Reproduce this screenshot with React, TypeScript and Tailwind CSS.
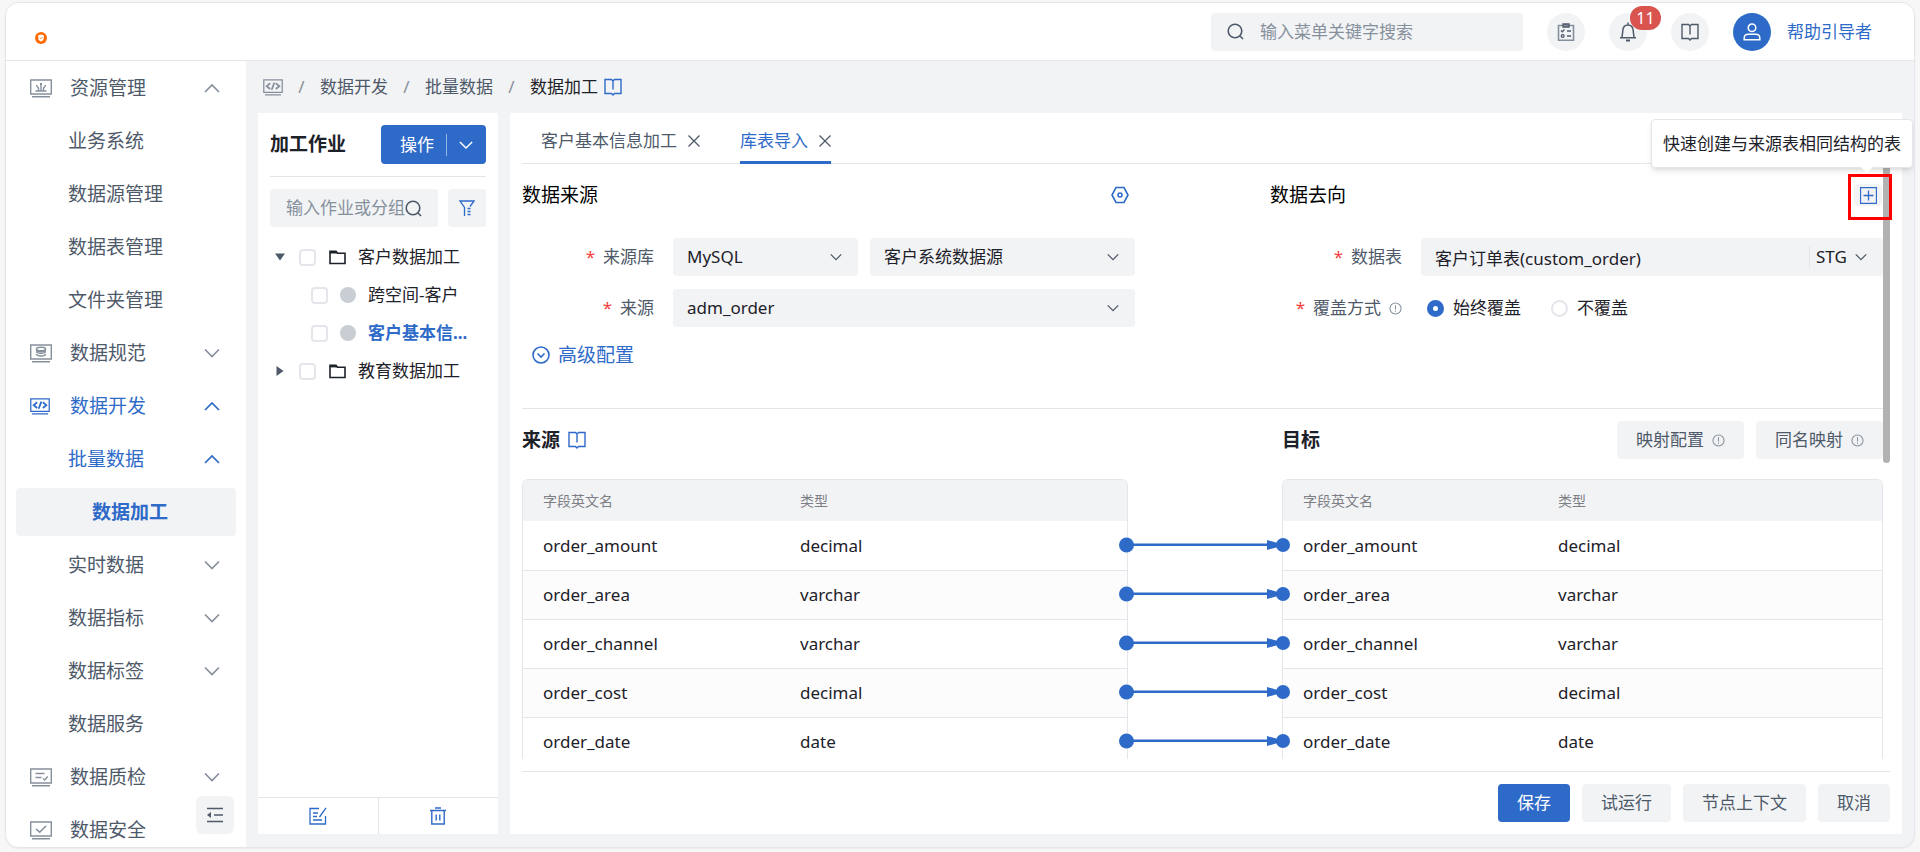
import { ReactNode } from "react";
import { clsx } from "clsx";

interface MenuItem {
  label: string;
  level: 1 | 2 | 3;
  icon?: ReactNode;
  arrow?: "up" | "down";
  active?: boolean;
  current?: boolean;
}

interface IconProps {
  className?: string;
}

const Chevron = ({ className = "", up = false }: IconProps & { up?: boolean }) => (
  <svg
    viewBox="0 0 16 16"
    className={clsx("shrink-0", className)}
    fill="none"
    stroke="currentColor"
    strokeWidth="1.7"
  >
    <path d={up ? "M1 12 8 5l7 7" : "M1 4.500 8 11.500l7-7"} />
  </svg>
);

const CloseIcon = () => (
  <svg viewBox="0 0 12 12" className="size-3" stroke="currentColor" strokeWidth="1.3">
    <path d="M.5.5l11 11M11.500.5l-11 11" />
  </svg>
);

const SearchIcon = ({ className = "size-[17px]" }: IconProps) => (
  <svg
    viewBox="0 0 17 17"
    className={clsx("shrink-0", className)}
    fill="none"
    stroke="currentColor"
    strokeWidth="1.6"
  >
    <circle cx="8" cy="8" r="6.800" />
    <path d="M12.700 12.700 16 16" />
  </svg>
);

const BookIcon = ({ className = "" }: IconProps) => (
  <svg
    viewBox="0 0 18 18"
    className={clsx("size-[18px] shrink-0", className)}
    fill="none"
    stroke="currentColor"
    strokeWidth="1.4"
  >
    <path d="M1 1.500h6.500L9 3l1.500-1.500H17v14h-6.500L9 17l-1.500-1.500H1zM9 3v8.500" />
  </svg>
);

const InfoIcon = () => (
  <svg
    viewBox="0 0 14 14"
    className="size-[13px] shrink-0 text-[#86909c]"
    fill="none"
    stroke="currentColor"
    strokeWidth="1.1"
  >
    <circle cx="7" cy="7" r="6" />
    <path d="M7 3.500v4.500M7 9.200v1.300" />
  </svg>
);

// monitor outline shared by all of the menu icons
const Screen = ({ children, className = "h-[19px] w-[22px]" }: { children: ReactNode; className?: string }) => (
  <svg
    viewBox="0 0 22 19"
    className={clsx("shrink-0", className)}
    fill="none"
    stroke="currentColor"
    strokeWidth="1.4"
  >
    <path d="M.7 1h20.600v14H.7zM2 17.700h18" />
    {children}
  </svg>
);

const CodeScreen = ({ className }: IconProps) => (
  <Screen className={className}>
    <path d="M7.800 4.800 4 8l3.800 3.200M14.200 4.800 18 8l-3.800 3.200M12.500 4l-3 8" strokeWidth="2" />
  </Screen>
);

const menu: MenuItem[] = [
  {
    label: "资源管理",
    level: 1,
    arrow: "up",
    icon: (
      <Screen>
        <path d="M5.500 12h11M11 12V5M8.500 12V9L7 7.500M13.500 12V9L15 7.500" />
        <path d="M10 4h2v2h-2zM6 6h1.500v1.500H6zM14.500 6H16v1.500h-1.500z" fill="currentColor" stroke="none" />
      </Screen>
    ),
  },
  { label: "业务系统", level: 2 },
  { label: "数据源管理", level: 2 },
  { label: "数据表管理", level: 2 },
  { label: "文件夹管理", level: 2 },
  {
    label: "数据规范",
    level: 1,
    arrow: "down",
    icon: (
      <Screen>
        <ellipse cx="11" cy="5" rx="4.500" ry="1.700" />
        <path d="M6.500 7.500c0 2.300 9 2.300 9 0M6.500 10c0 2.600 9 2.600 9 0M6.500 5v1c0 2 9 2 9 0V5" />
      </Screen>
    ),
  },
  { label: "数据开发", level: 1, arrow: "up", active: true, icon: <CodeScreen className="h-[17px] w-5" /> },
  { label: "批量数据", level: 2, arrow: "up", active: true },
  { label: "数据加工", level: 3, active: true, current: true },
  { label: "实时数据", level: 2, arrow: "down" },
  { label: "数据指标", level: 2, arrow: "down" },
  { label: "数据标签", level: 2, arrow: "down" },
  { label: "数据服务", level: 2 },
  {
    label: "数据质检",
    level: 1,
    arrow: "down",
    icon: (
      <Screen>
        <path d="M5.500 5.500h9M5.500 9.500h6M13 10.500l1.700 1.500 3-3.500" />
      </Screen>
    ),
  },
  {
    label: "数据安全",
    level: 1,
    icon: (
      <Screen>
        <path d="M6 8l3.700 3.200L16 5" strokeWidth="1.600" />
      </Screen>
    ),
  },
];

const fields = [
  { name: "order_amount", type: "decimal" },
  { name: "order_area", type: "varchar" },
  { name: "order_channel", type: "varchar" },
  { name: "order_cost", type: "decimal" },
  { name: "order_date", type: "date" },
];

const Header = () => (
  <header className="flex h-[58px] shrink-0 items-center border-b border-[#e5e6eb] bg-white pr-[42px] pl-[29px] text-[17px]">
    <svg viewBox="0 0 12 12" className="mt-3 size-3">
      <circle cx="6" cy="6" r="6" fill="#ff6a00" />
      <path d="M3.200 3.200 6 2.500l2.800.7v2.900C8.800 8 7.500 9 6 9.600 4.500 9 3.200 8 3.200 6.100z" fill="#fff" />
      <path d="M4.700 5.900l1 1 1.700-1.700" fill="none" stroke="#ff6a00" strokeWidth=".7" />
    </svg>
    <label className="ml-auto flex h-[38px] w-[312px] items-center gap-4 rounded bg-[#f2f3f5] px-4 text-[#4e5969]">
      <SearchIcon />
      <input
        aria-label="搜索"
        placeholder="输入菜单关键字搜索"
        className="min-w-0 flex-1 bg-transparent outline-none placeholder:text-[#86909c]"
      />
    </label>
    <div className="ml-6 flex gap-6 text-[#4e5969]">
      <button aria-label="任务" className="flex size-[38px] items-center justify-center rounded-full bg-[#f2f3f5]">
        <svg viewBox="0 0 18 18" className="size-[18px]" fill="none" stroke="currentColor" strokeWidth="1.3">
          <path d="M6 2.500H1.500v14.800h15V2.500H12" stroke="#86909c" strokeWidth="1.6" />
          <path d="M6 1h6v3H6z" fill="#86909c" />
          <path d="M4 7.500l1.300 1.300L7.500 6.500M10 8h4M10 13h4" />
          <circle cx="5.700" cy="13" r="1.400" />
        </svg>
      </button>
      <button aria-label="通知" className="relative flex size-[38px] items-center justify-center rounded-full bg-[#f2f3f5]">
        <svg viewBox="0 0 18 20" className="h-5 w-[18px]" fill="none" stroke="currentColor" strokeWidth="1.5">
          <path d="M9 .5v2M1 15.800h16M3 15.800l.8-7.300C4.300 1 13.700 1 14.200 8.500l.8 7.300" />
          <path d="M7 18.500h4" strokeWidth="2" />
        </svg>
        <span className="absolute -top-[7px] left-[21px] flex h-6 w-[31px] items-center justify-center rounded-full bg-[#d9534f] text-base text-white">
          11
        </span>
      </button>
      <button aria-label="文档" className="flex size-[38px] items-center justify-center rounded-full bg-[#f2f3f5]">
        <BookIcon />
      </button>
      <a href="#" className="flex items-center gap-4 text-[#2e6ac8]">
        <span className="flex size-[38px] items-center justify-center rounded-full bg-[#2e6ac8] text-white">
          <svg viewBox="0 0 18 18" className="size-[18px]" fill="none" stroke="currentColor" strokeWidth="1.5">
            <circle cx="9" cy="4.800" r="3.800" />
            <path d="M1.200 16.800v-1.500c0-2.500 1.500-4 4-4h7.600c2.500 0 4 1.500 4 4v1.500z" />
          </svg>
        </span>
        帮助引导者
      </a>
    </div>
  </header>
);

const Sidebar = () => (
  <aside className="relative w-60 shrink-0 overflow-hidden bg-white">
    <nav className="flex flex-col gap-[5px] px-2.5 pt-[3px] text-[19px]">
      {menu.map((item) => (
        <a
          key={item.label}
          href="#"
          className={clsx(
            "flex h-12 shrink-0 items-center rounded pr-4",
            item.level === 1 && "pl-3.5",
            item.level === 2 && "pl-[52px]",
            item.level === 3 && "pl-[76px]",
            item.active ? "text-[#2e6ac8]" : "text-[#4e5969]",
            item.current && "bg-[#f2f3f5] font-bold"
          )}
        >
          {item.icon && (
            <span className={clsx("flex w-10", !item.active && "text-[#86909c]")}>{item.icon}</span>
          )}
          {item.label}
          {item.arrow && (
            <Chevron
              up={item.arrow === "up"}
              className={clsx("ml-auto size-4", !item.active && "text-[#86909c]")}
            />
          )}
        </a>
      ))}
    </nav>
    <button
      aria-label="收起菜单"
      className="absolute right-3 bottom-[13px] flex size-[38px] items-center justify-center rounded-md bg-[#f2f3f5] text-[#4e5969]"
    >
      <svg viewBox="0 0 18 16" className="h-4 w-[18px]" stroke="currentColor" strokeWidth="1.6">
        <path d="M1 1.500h16M8 8h9M1 14.500h16" />
        <path d="M5 5v6L1 8z" fill="currentColor" stroke="none" />
      </svg>
    </button>
  </aside>
);

const Breadcrumb = () => (
  <nav className="flex h-[52px] shrink-0 items-center pl-[5px] text-[17px] text-[#4e5969]">
    <CodeScreen className="h-[17px] w-5 text-[#86909c]" />
    {["数据开发", "批量数据", "数据加工"].map((name, i) => (
      <div key={name} className="flex items-center">
        <span className="w-[37px] text-center text-[#86909c]">/</span>
        <a href="#" className={clsx(i === 2 && "text-[#1d2129]")}>
          {name}
        </a>
      </div>
    ))}
    <BookIcon className="ml-1.5 text-[#2e6ac8]" />
  </nav>
);

const Folder = () => (
  <svg viewBox="0 0 17 15" className="h-[15px] w-[17px] shrink-0" fill="none" stroke="#1d2129" strokeWidth="1.6">
    <path d="M1 13.500V1.200h6l1.500 2H16v10.300z" />
    <path d="M1 2.200h7" strokeWidth="2.400" />
  </svg>
);

const TreeCheck = ({ label }: { label: string }) => (
  <input
    type="checkbox"
    aria-label={label}
    className="size-[17px] shrink-0 appearance-none rounded border-2 border-[#e5e6eb] bg-white checked:bg-[#2e6ac8]"
  />
);

const TreeFolder = ({ label, open = false }: { label: string; open?: boolean }) => (
  <li className="flex h-[38px] items-center pl-[5px]">
    <svg viewBox="0 0 10 10" className="mr-3.5 size-2.5 shrink-0" fill="#4e5969">
      <path d={open ? "M0 1.500h10L5 8.500z" : "M1.500 0v10l7-5z"} />
    </svg>
    <TreeCheck label={label} />
    <span className="mr-3 ml-[13px]">
      <Folder />
    </span>
    {label}
  </li>
);

const TreeLeaf = ({ label, selected = false }: { label: string; selected?: boolean }) => (
  <li className="flex h-[38px] items-center pl-[41px]">
    <TreeCheck label={label} />
    <span className="mr-3 ml-3 size-4 shrink-0 rounded-full bg-[#c9cdd4]" />
    <span className={clsx(selected && "font-bold text-[#2e6ac8]")}>{label}</span>
  </li>
);

const JobPanel = () => (
  <section className="flex w-60 shrink-0 flex-col bg-white text-[17px] text-[#1d2129]">
    <div className="mx-3 flex items-center justify-between border-b border-[#e5e6eb] py-3">
      <h2 className="text-[19px] font-bold">加工作业</h2>
      <button className="flex h-[39px] items-center rounded bg-[#2e6ac8] pr-[13px] pl-[19px] text-white">
        操作
        <span className="ml-3 h-[22px] w-px bg-white/50" />
        <Chevron className="ml-3 size-3.5" />
      </button>
    </div>
    <div className="mx-3 mt-3 flex gap-2.5">
      <label className="flex h-[38px] min-w-0 flex-1 items-center rounded bg-[#f2f3f5] px-4 text-[#4e5969]">
        <input
          aria-label="作业搜索"
          placeholder="输入作业或分组"
          className="min-w-0 flex-1 bg-transparent outline-none placeholder:text-[#86909c]"
        />
        <SearchIcon />
      </label>
      <button
        aria-label="筛选"
        className="flex size-[38px] shrink-0 items-center justify-center rounded bg-[#f2f3f5] text-[#2e6ac8]"
      >
        <svg viewBox="0 0 16 17" className="h-[17px] w-4" fill="none" stroke="currentColor" strokeWidth="1.3">
          <path d="M5.500 16V7.500L1 1h14l-4 5.500M8.500 8.500h3M8.500 11.500h3M8.500 14.500h3" />
        </svg>
      </button>
    </div>
    <ul className="mx-3 mt-[11px] flex-1">
      <TreeFolder label="客户数据加工" open />
      <TreeLeaf label="跨空间-客户" />
      <TreeLeaf label="客户基本信..." selected />
      <TreeFolder label="教育数据加工" />
    </ul>
    <div className="flex h-[37px] border-t border-[#e5e6eb] text-[#2e6ac8]">
      <button aria-label="编辑" className="flex flex-1 items-center justify-center border-r border-[#e5e6eb]">
        <svg viewBox="0 0 18 18" className="size-[18px]" fill="none" stroke="currentColor" strokeWidth="1.3">
          <path d="M10 1.500H1v15.500h15.500V9M17 .8 10.500 10M4 6h5M4 9.500h4M4 13h9" />
        </svg>
      </button>
      <button aria-label="删除" className="flex flex-1 items-center justify-center">
        <svg viewBox="0 0 18 18" className="size-[18px]" fill="none" stroke="currentColor" strokeWidth="1.4">
          <path d="M1 3.500h16M6 1h6M2.800 4v13h12.400V4M7.200 7.500v6M10.800 7.500v6" />
        </svg>
      </button>
    </div>
  </section>
);

interface SelectProps {
  label: string;
  value: string;
  className: string;
  compact?: boolean;
}

const Select = ({ label, value, className, compact = false }: SelectProps) => (
  <div className={clsx("relative flex h-[38px] items-center rounded bg-[#f2f3f5] text-[#1d2129]", className)}>
    <select
      aria-label={label}
      className={clsx(
        "h-full w-full appearance-none bg-transparent outline-none",
        compact ? "pl-1.5" : "pr-9 pl-3.5"
      )}
    >
      <option>{value}</option>
    </select>
    <Chevron className="pointer-events-none absolute right-4 size-3 text-[#4e5969]" />
  </div>
);

const FormRow = ({ label, info = false, children }: { label: string; info?: boolean; children: ReactNode }) => (
  <div className="flex h-[38px] items-center">
    <span className="flex w-[151px] shrink-0 items-center justify-end gap-2 pr-[19px] text-[#4e5969]">
      <span className="text-[#f53f3f]">*</span>
      {label}
      {info && <InfoIcon />}
    </span>
    {children}
  </div>
);

const Radio = ({ label, checked = false }: { label: string; checked?: boolean }) => (
  <label className="flex items-center gap-[9px] text-[#1d2129]">
    <input
      type="radio"
      name="cover"
      defaultChecked={checked}
      className="size-[17px] appearance-none rounded-full border-2 border-[#e5e6eb] bg-white checked:border-[6px] checked:border-[#2e6ac8]"
    />
    {label}
  </label>
);

const FieldTable = ({ className, firstCol }: { className: string; firstCol: string }) => (
  <div className={clsx("min-w-0 rounded-t-md border border-b-0 border-[#e5e6eb]", className)}>
    <table className="w-full table-fixed text-left">
      <thead>
        <tr className="h-[41px] bg-[#f2f3f5] text-sm text-[#7d7f85]">
          <th className={clsx("pl-5 font-normal", firstCol)}>字段英文名</th>
          <th className="font-normal">类型</th>
        </tr>
      </thead>
      <tbody className="text-[#1d2129]">
        {fields.map((field) => (
          <tr key={field.name} className="h-[49px] border-b border-[#e5e6eb] even:bg-[#fcfcfc]">
            <td className="pl-5">{field.name}</td>
            <td>{field.type}</td>
          </tr>
        ))}
      </tbody>
    </table>
  </div>
);

const Links = () => (
  <div className="z-10 -mx-2.5 w-[174px] shrink-0 pt-[42px]">
    {fields.map((field) => (
      <svg key={field.name} viewBox="0 0 174 49" className="h-[49px] w-[174px]" fill="#2e6ac8">
        <path d="M8 22.500h150v2.500H8z" />
        <path d="M149 19v10l14-4v-2z" />
        <circle cx="8.500" cy="24" r="7.500" />
        <circle cx="165" cy="24" r="7" />
      </svg>
    ))}
  </div>
);

const grayButton = "flex h-[38px] items-center gap-2 rounded bg-[#f2f3f5] px-[19px] text-[#4e5969]";

const Editor = () => (
  <section className="relative flex min-w-0 flex-1 flex-col bg-white px-3 text-[17px]">
    <div className="flex h-[51px] shrink-0 gap-10 border-b border-[#e5e6eb] pl-[19px] text-[#4e5969]">
      <div className="flex h-[51px] items-center gap-[11px] pt-1">
        <button>客户基本信息加工</button>
        <button aria-label="关闭客户基本信息加工">
          <CloseIcon />
        </button>
      </div>
      <div className="flex h-[51px] items-center gap-[11px] border-b-3 border-[#2e6ac8] pt-[7px]">
        <button className="text-[#2e6ac8]">库表导入</button>
        <button aria-label="关闭库表导入">
          <CloseIcon />
        </button>
      </div>
    </div>

    <div className="min-h-0 flex-1 overflow-hidden pr-[7px]">
      <div className="flex h-[245px] gap-[135px] border-b border-[#e5e6eb]">
        <div className="flex-1">
          <div className="flex h-[62px] items-center justify-between pr-1.5">
            <h3 className="text-[19px] text-black">数据来源</h3>
            <button aria-label="来源设置" className="text-[#2e6ac8]">
              <svg viewBox="0 0 18 18" className="size-[18px]" fill="none" stroke="currentColor" strokeWidth="1.6">
                <path d="M5 1.500h8L17 9l-4 7.500H5L1 9z" />
                <circle cx="9" cy="9" r="2" />
              </svg>
            </button>
          </div>
          <div className="mt-3 flex flex-col gap-[13px]">
            <FormRow label="来源库">
              <Select label="来源库" value="MySQL" className="w-[185px] shrink-0" />
              <Select label="数据源" value="客户系统数据源" className="ml-3 flex-1" />
            </FormRow>
            <FormRow label="来源">
              <Select label="来源" value="adm_order" className="flex-1" />
            </FormRow>
          </div>
          <button className="mt-3.5 ml-2.5 flex items-center gap-2 text-[19px] text-[#2e6ac8]">
            <svg viewBox="0 0 18 18" className="size-[18px]" fill="none" stroke="currentColor" strokeWidth="1.6">
              <circle cx="9" cy="9" r="8" />
              <path d="M5.500 7.500 9 11l3.500-3.500" />
            </svg>
            高级配置
          </button>
        </div>
        <div className="flex-1">
          <div className="flex h-[62px] items-center justify-between pr-px">
            <h3 className="text-[19px] text-black">数据去向</h3>
            <button
              aria-label="快速建表"
              className="flex h-[22px] w-7 items-center justify-center rounded bg-[#f2f3f5] text-[#2e6ac8]"
            >
              <svg viewBox="0 0 17 17" className="size-[17px]" fill="none" stroke="currentColor">
                <path d="M.5.5h16v16H.5zM8.500 3.500v10M3.500 8.500h10" strokeWidth="1.300" />
              </svg>
            </button>
          </div>
          <div className="mt-3 flex flex-col gap-[13px]">
            <FormRow label="数据表">
              <div className="flex h-[38px] flex-1 items-center rounded bg-[#f2f3f5] text-[#1d2129]">
                <input
                  aria-label="数据表"
                  defaultValue="客户订单表(custom_order)"
                  className="h-full min-w-0 flex-1 bg-transparent pl-3.5 outline-none"
                />
                <span className="h-[22px] w-px bg-[#e5e6eb]" />
                <Select label="分层" value="STG" className="w-[73px]" compact />
              </div>
            </FormRow>
            <FormRow label="覆盖方式" info>
              <div className="flex gap-[30px] pl-1.5">
                <Radio label="始终覆盖" checked />
                <Radio label="不覆盖" />
              </div>
            </FormRow>
          </div>
        </div>
      </div>

      <div className="flex h-[62px] items-center gap-3">
        <h3 className="flex flex-1 items-center gap-2 text-[19px] font-bold text-[#1d2129]">
          来源
          <BookIcon className="text-[#2e6ac8]" />
        </h3>
        <div className="flex w-[601px] items-center gap-3">
          <h3 className="flex-1 text-[19px] font-bold text-[#1d2129]">目标</h3>
          <button className={grayButton}>
            映射配置
            <InfoIcon />
          </button>
          <button className={grayButton}>
            同名映射
            <InfoIcon />
          </button>
        </div>
      </div>
      <div className="mt-2 flex">
        <FieldTable className="flex-1" firstCol="w-[277px]" />
        <Links />
        <FieldTable className="w-[601px] shrink-0" firstCol="w-[275px]" />
      </div>
    </div>

    <div className="absolute top-[51px] right-3 h-[299px] w-[7px] rounded-full bg-[#b2b2b2]" />

    <footer className="mt-3 flex h-[63px] shrink-0 items-center justify-end gap-3 border-t border-[#e5e6eb]">
      <button className="h-[38px] rounded bg-[#2e6ac8] px-[19px] text-white">保存</button>
      <button className={grayButton}>试运行</button>
      <button className={grayButton}>节点上下文</button>
      <button className={grayButton}>取消</button>
    </footer>

    <div
      role="tooltip"
      className="absolute top-1.5 -right-[11px] flex h-[49px] items-center rounded border border-[#e5e6eb] bg-white px-[11px] text-[#1d2129] shadow-md"
    >
      快速创建与来源表相同结构的表
      <span className="absolute right-10 -bottom-1 size-2.5 rotate-45 bg-white" />
    </div>
    <div className="absolute top-[61px] right-2.5 h-[46px] w-11 border-3 border-[#ff0000]" />
  </section>
);

export default function App() {
  return (
    <div className="flex h-screen flex-col bg-[#f7f7f7] px-[5px] pt-0.5 pb-1 font-['Noto_Sans','Noto_Sans_CJK_SC',sans-serif]">
      <div className="flex min-h-0 flex-1 flex-col overflow-hidden rounded-[14px] border border-[#e5e6eb] bg-[#f2f3f5] shadow-xs">
        <Header />
        <div className="flex min-h-0 flex-1">
          <Sidebar />
          <main className="flex min-w-0 flex-1 flex-col px-3 pb-[13px]">
            <Breadcrumb />
            <div className="flex min-h-0 flex-1 gap-3">
              <JobPanel />
              <Editor />
            </div>
          </main>
        </div>
      </div>
    </div>
  );
}
